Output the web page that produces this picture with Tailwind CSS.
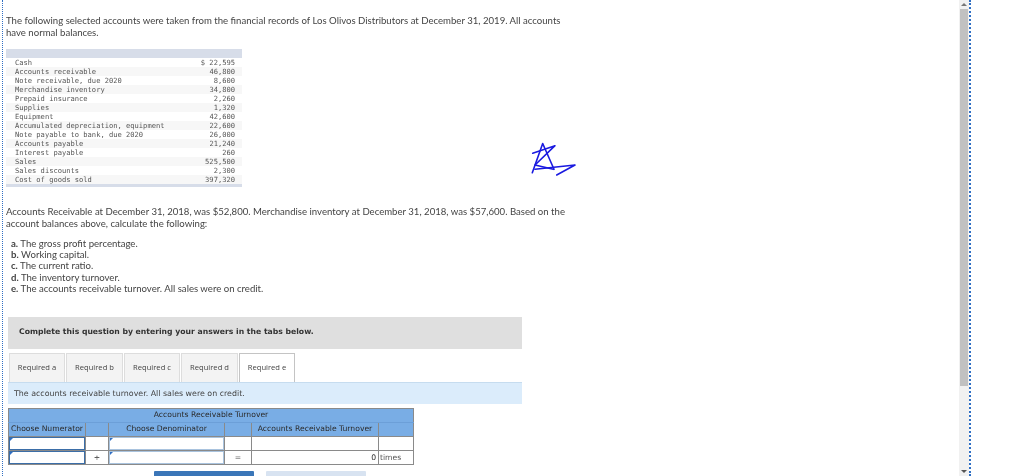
<!DOCTYPE html>
<html>
<head>
<meta charset="utf-8">
<script src="https://cdn.jsdelivr.net/npm/@tailwindcss/browser@4"></script>
</head>
<body class="bg-white">
<div class="relative flex h-[476px] w-[1024px] overflow-hidden bg-white font-['Lato',sans-serif] text-[#444]">
  <div class="ml-[2px] h-full w-[1px] shrink-0 border-l border-dotted border-[#2f6fc4]"></div>
  <main class="w-[956px] shrink-0 pl-[3px] pt-[15px] blur-[0.3px]">
    <p class="w-[565px] text-[9.6px] leading-[11.5px]">The following selected accounts were taken from the financial records of Los Olivos Distributors at December 31, 2019. All accounts have normal balances.</p>
    <div class="mt-[11px] w-[236px] border-t-[9px] border-b-[3px] border-t-[#d7dde9] border-b-[#d7dde9] font-['DejaVu_Sans_Mono',monospace] text-[7.1px] leading-[9px] text-[#555]">
      <div class="flex h-[9px] justify-between bg-white pl-[9px] pr-[7px]"><span>Cash</span><span>$ 22,595</span></div>
      <div class="flex h-[9px] justify-between bg-[#f7f7f7] pl-[9px] pr-[7px]"><span>Accounts receivable</span><span>46,800</span></div>
      <div class="flex h-[9px] justify-between bg-white pl-[9px] pr-[7px]"><span>Note receivable, due 2020</span><span>8,600</span></div>
      <div class="flex h-[9px] justify-between bg-[#f7f7f7] pl-[9px] pr-[7px]"><span>Merchandise inventory</span><span>34,800</span></div>
      <div class="flex h-[9px] justify-between bg-white pl-[9px] pr-[7px]"><span>Prepaid insurance</span><span>2,260</span></div>
      <div class="flex h-[9px] justify-between bg-[#f7f7f7] pl-[9px] pr-[7px]"><span>Supplies</span><span>1,320</span></div>
      <div class="flex h-[9px] justify-between bg-white pl-[9px] pr-[7px]"><span>Equipment</span><span>42,600</span></div>
      <div class="flex h-[9px] justify-between bg-[#f7f7f7] pl-[9px] pr-[7px]"><span>Accumulated depreciation, equipment</span><span>22,600</span></div>
      <div class="flex h-[9px] justify-between bg-white pl-[9px] pr-[7px]"><span>Note payable to bank, due 2020</span><span>26,000</span></div>
      <div class="flex h-[9px] justify-between bg-[#f7f7f7] pl-[9px] pr-[7px]"><span>Accounts payable</span><span>21,240</span></div>
      <div class="flex h-[9px] justify-between bg-white pl-[9px] pr-[7px]"><span>Interest payable</span><span>260</span></div>
      <div class="flex h-[9px] justify-between bg-[#f7f7f7] pl-[9px] pr-[7px]"><span>Sales</span><span>525,500</span></div>
      <div class="flex h-[9px] justify-between bg-white pl-[9px] pr-[7px]"><span>Sales discounts</span><span>2,300</span></div>
      <div class="flex h-[9px] justify-between bg-[#f7f7f7] pl-[9px] pr-[7px]"><span>Cost of goods sold</span><span>397,320</span></div>
    </div>
    <p class="mt-[19px] w-[565px] text-[9.6px] leading-[11.5px]">Accounts Receivable at December 31, 2018, was $52,800. Merchandise inventory at December 31, 2018, was $57,600. Based on the account balances above, calculate the following:</p>
    <ul class="mt-[9px] ml-[5px] text-[9.6px] leading-[11.2px]">
      <li><b class="font-bold">a.</b> The gross profit percentage.</li>
      <li><b class="font-bold">b.</b> Working capital.</li>
      <li><b class="font-bold">c.</b> The current ratio.</li>
      <li><b class="font-bold">d.</b> The inventory turnover.</li>
      <li><b class="font-bold">e.</b> The accounts receivable turnover. All sales were on credit.</li>
    </ul>
    <div class="mt-[23px] ml-[2px] flex h-[32px] w-[514px] items-center bg-[#dfdfdf] pb-[3px] pl-[11px] font-['DejaVu_Sans',sans-serif] text-[7.7px] font-bold text-[#333]">Complete this question by entering your answers in the tabs below.</div>
    <div class="mt-[4px] ml-[3px] flex h-[29px] gap-[1px] font-['Open_Sans',sans-serif] text-[7.6px] text-[#444]">
      <div class="flex w-[56px] items-center justify-center border border-b-0 border-[#ddd] bg-[#f3f3f3]">Required a</div>
      <div class="flex w-[57px] items-center justify-center border border-b-0 border-[#ddd] bg-[#f3f3f3]">Required b</div>
      <div class="flex w-[56px] items-center justify-center border border-b-0 border-[#ddd] bg-[#f3f3f3]">Required c</div>
      <div class="flex w-[57px] items-center justify-center border border-b-0 border-[#ddd] bg-[#f3f3f3]">Required d</div>
      <div class="flex w-[56px] items-center justify-center border border-b-0 border-[#c4c4c4] bg-white">Required e</div>
    </div>
    <div class="ml-[2px] flex h-[22px] w-[514px] items-center border-t border-[#c6dcef] bg-[#dbecfb] pl-[6px] font-['DejaVu_Sans',sans-serif] text-[7.9px] text-[#444]">The accounts receivable turnover. All sales were on credit.</div>
    <table class="mt-[4px] ml-[2px] w-[405px] table-fixed border-collapse border border-[#8a8a8a] font-['DejaVu_Sans',sans-serif] text-[7.65px] leading-[10px] text-[#2b2b2b]">
      <colgroup><col class="w-[77px]"><col class="w-[23px]"><col class="w-[116px]"><col class="w-[27px]"><col class="w-[127px]"><col class="w-[35px]"></colgroup>
      <tr class="h-[14px] bg-[#79ade5]"><th colspan="6" class="border-b border-[#6c9fd8] p-0 pb-[2px] font-medium">Accounts Receivable Turnover</th></tr>
      <tr class="h-[14px] bg-[#79ade5]">
        <th class="border-r border-b border-[#8a8a8a] p-0 pb-[1px] font-medium whitespace-nowrap">Choose Numerator</th>
        <th class="border-r border-b border-[#8a8a8a] p-0"></th>
        <th class="border-r border-b border-[#8a8a8a] p-0 pb-[1px] font-medium">Choose Denominator</th>
        <th class="border-r border-b border-[#8a8a8a] p-0"></th>
        <th class="border-r border-b border-[#8a8a8a] p-0 pb-[1px] font-medium whitespace-nowrap">Accounts Receivable Turnover</th>
        <th class="border-b border-[#8a8a8a] p-0"></th>
      </tr>
      <tr class="h-[14px]">
        <td class="relative border-r border-b border-[#8a8a8a] p-0 shadow-[inset_0_0_0_1px_#3b6ea8]"><span class="absolute top-[1px] left-[1px] size-0 border-t-[3px] border-r-[3px] border-t-[#2f6fc4] border-r-transparent"></span></td>
        <td class="border-r border-b border-[#8a8a8a] p-0"></td>
        <td class="relative border-r border-b border-[#8a8a8a] p-0 shadow-[inset_0_0_0_1px_#a9c3de]"><span class="absolute top-[1px] left-[1px] size-0 border-t-[3px] border-r-[3px] border-t-[#2f6fc4] border-r-transparent"></span></td>
        <td class="border-r border-b border-[#8a8a8a] p-0"></td>
        <td class="border-r border-b border-[#8a8a8a] p-0"></td>
        <td class="border-b border-[#8a8a8a] p-0"></td>
      </tr>
      <tr class="h-[14px]">
        <td class="relative border-r border-[#8a8a8a] p-0 shadow-[inset_0_0_0_1px_#3b6ea8]"><span class="absolute top-[1px] left-[1px] size-0 border-t-[3px] border-r-[3px] border-t-[#2f6fc4] border-r-transparent"></span></td>
        <td class="border-r border-[#8a8a8a] p-0 text-center">÷</td>
        <td class="relative border-r border-[#8a8a8a] p-0 shadow-[inset_0_0_0_1px_#a9c3de]"><span class="absolute top-[1px] left-[1px] size-0 border-t-[3px] border-r-[3px] border-t-[#2f6fc4] border-r-transparent"></span></td>
        <td class="border-r border-[#8a8a8a] p-0 text-center text-[#888]">=</td>
        <td class="border-r border-[#8a8a8a] p-0 pr-[2px] text-right">0</td>
        <td class="p-0 pl-[1px] text-[#555]">times</td>
      </tr>
    </table>
    <div class="mt-[6px] ml-[148px] flex gap-[12px]">
      <div class="h-[20px] w-[100px] rounded-t-[1px] bg-[#3b76b8]"></div>
      <div class="h-[20px] w-[100px] rounded-t-[1px] bg-[#d8e3f1]"></div>
    </div>
  </main>
  <div class="flex h-full w-[10px] shrink-0 flex-col bg-[#f1f1f1]">
    <div class="flex h-[9px] items-center justify-center"><span class="size-0 border-x-[3px] border-b-[3px] border-x-transparent border-b-[#777]"></span></div>
    <div class="mx-[1px] h-[377px] bg-[#c1c1c1]"></div>
    <div class="flex-1"></div>
    <div class="flex h-[9px] items-center justify-center"><span class="size-0 border-x-[3px] border-t-[3px] border-x-transparent border-t-[#555]"></span></div>
  </div>
  <div class="h-full w-[1px] shrink-0 border-l-2 border-dotted border-[#2f6fc4]"></div>
  <svg class="absolute top-0 left-0" width="1024" height="476" fill="none" stroke="#1a1ae0" stroke-width="1.6" stroke-linecap="round" stroke-linejoin="round">
    <path d="M532.3 172.7L542.7 143.5L554 169.3"/>
    <path d="M532.7 153.3L555 145.7L535 165L553.3 169.3"/>
    <path d="M535 169.3L575 165L556.7 175"/>
  </svg>
</div>
</body>
</html>
